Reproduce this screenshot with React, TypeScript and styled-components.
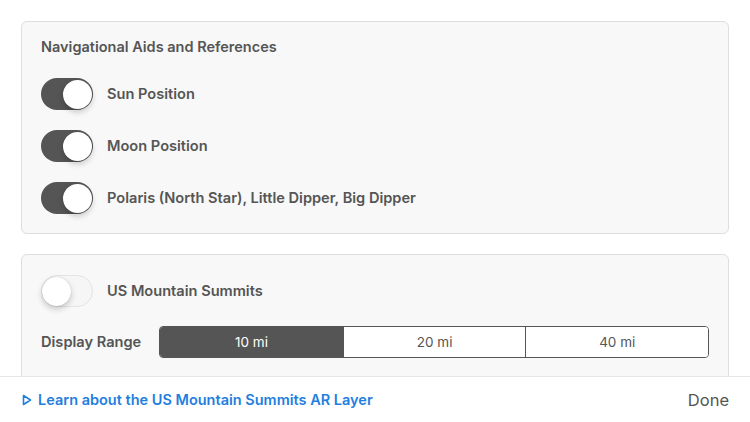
import { useState } from 'react';
import styled, { createGlobalStyle } from 'styled-components';

const GlobalStyle = createGlobalStyle`
  html, body {
    margin: 0;
    padding: 0;
    background: #ffffff;
    font-family: Inter, "Open Sans", "Liberation Sans", sans-serif;
    color: #555555;
  }
`;

const RANGES = ['10 mi', '20 mi', '40 mi'];

const App = () => {
    const [sun, setSun] = useState(true);
    const [moon, setMoon] = useState(true);
    const [polaris, setPolaris] = useState(true);
    const [summits, setSummits] = useState(false);
    const [range, setRange] = useState(RANGES[0]);

    return (
        <Page>
            <GlobalStyle />
            <Scroll>
                <Card>
                    <CardTitle>Navigational Aids and References</CardTitle>
                    <ToggleList>
                        <ToggleRow>
                            <Switch $on={sun} onClick={() => setSun(!sun)} />
                            <Label>Sun Position</Label>
                        </ToggleRow>
                        <ToggleRow>
                            <Switch $on={moon} onClick={() => setMoon(!moon)} />
                            <Label>Moon Position</Label>
                        </ToggleRow>
                        <ToggleRow>
                            <Switch $on={polaris} onClick={() => setPolaris(!polaris)} />
                            <Label>Polaris (North Star), Little Dipper, Big Dipper</Label>
                        </ToggleRow>
                    </ToggleList>
                </Card>
                <Card $open>
                    <ToggleRow>
                        <Switch $on={summits} onClick={() => setSummits(!summits)} />
                        <Label>US Mountain Summits</Label>
                    </ToggleRow>
                    <RangeRow>
                        <Label>Display Range</Label>
                        <Segmented>
                            {RANGES.map((r) => (
                                <Segment key={r} $active={r === range} onClick={() => setRange(r)}>
                                    {r}
                                </Segment>
                            ))}
                        </Segmented>
                    </RangeRow>
                </Card>
            </Scroll>
            <Footer>
                <LearnLink href="#">
                    <svg width="10" height="12" viewBox="0 0 10 12" style={{ marginRight: 6 }}>
                        <path d="M1.5 1.5 L8.5 6 L1.5 10.5 Z" fill="none" stroke="currentColor" strokeWidth="1.6" strokeLinejoin="round" />
                    </svg>
                    Learn about the US Mountain Summits AR Layer
                </LearnLink>
                <DoneButton>Done</DoneButton>
            </Footer>
        </Page>
    );
};

export default App;

const Page = styled.div`
    width: 750px;
    height: 422px;
    display: flex;
    flex-direction: column;
    overflow: hidden;
    background: #ffffff;
`;

const Scroll = styled.div`
    flex: 1;
    overflow: hidden;
    padding: 21px 21px 0 21px;
    display: flex;
    flex-direction: column;
    gap: 20px;
`;

const Card = styled.section<{ $open?: boolean }>`
    background: #f8f8f8;
    border: 1px solid #dedede;
    border-radius: 6px;
    padding: ${({ $open }) => ($open ? '20px 19px 40px' : '16px 19px 19px')};
    display: flex;
    flex-direction: column;
    gap: ${({ $open }) => ($open ? '19px' : '0')};
`;

const CardTitle = styled.h2`
    margin: 0 0 22px;
    font-size: 14.5px;
    font-weight: 600;
    color: #555555;
    line-height: 18px;
`;

const ToggleList = styled.div`
    display: flex;
    flex-direction: column;
    gap: 20px;
`;

const ToggleRow = styled.div`
    display: flex;
    align-items: center;
    gap: 14px;
`;

const Label = styled.span`
    font-size: 14.6px;
    font-weight: 600;
    color: #555555;
    white-space: nowrap;
`;

const Switch = styled.button<{ $on: boolean }>`
    position: relative;
    width: 52px;
    height: 32px;
    flex: none;
    border-radius: 16px;
    border: ${({ $on }) => ($on ? 'none' : '1.5px solid #e4e4e4')};
    background: ${({ $on }) => ($on ? '#555555' : '#f6f6f6')};
    padding: 0;
    cursor: pointer;

    &::after {
        content: '';
        position: absolute;
        top: 50%;
        left: ${({ $on }) => ($on ? '22px' : '0px')};
        width: 29px;
        height: 29px;
        margin-top: -14.5px;
        border-radius: 50%;
        background: #ffffff;
        box-shadow: 0 3px 6px rgba(0, 0, 0, 0.2), 0 0 1px rgba(0, 0, 0, 0.25);
    }
`;

const RangeRow = styled.div`
    display: flex;
    align-items: center;
    gap: 18px;
`;

const Segmented = styled.div`
    display: grid;
    grid-template-columns: repeat(3, 1fr);
    width: 550px;
    height: 30px;
    border: 1px solid #555555;
    border-radius: 4px;
    overflow: hidden;
    background: #ffffff;
`;

const Segment = styled.button<{ $active: boolean }>`
    border: none;
    border-left: 1px solid #555555;
    background: ${({ $active }) => ($active ? '#555555' : '#ffffff')};
    color: ${({ $active }) => ($active ? '#ffffff' : '#555555')};
    font-family: inherit;
    font-size: 13.5px;
    font-weight: 400;
    cursor: pointer;

    &:first-child {
        border-left: none;
    }
`;

const Footer = styled.footer`
    height: 45px;
    flex: none;
    border-top: 1px solid #e6e6e6;
    background: #ffffff;
    display: flex;
    align-items: center;
    justify-content: space-between;
    padding: 0 21px 0 22px;
`;

const LearnLink = styled.a`
    display: flex;
    align-items: center;
    color: #1f7ee0;
    font-size: 14.5px;
    font-weight: 600;
    text-decoration: none;
`;

const DoneButton = styled.button`
    border: none;
    background: none;
    padding: 0;
    font-family: inherit;
    font-size: 16.5px;
    color: #555555;
    cursor: pointer;
`;
